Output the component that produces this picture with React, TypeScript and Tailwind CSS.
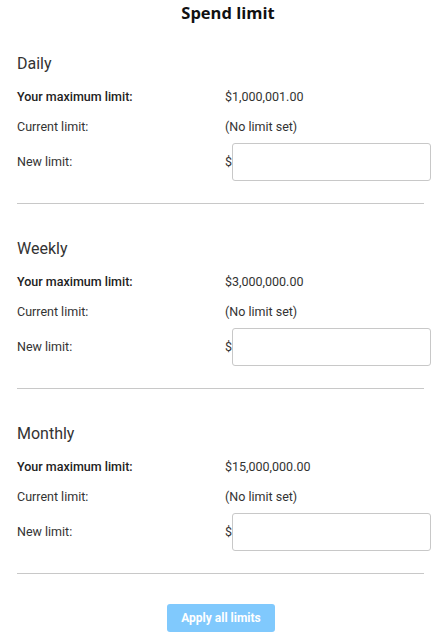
import React from 'react';

const sections = [
  { title: 'Daily', max: '$1,000,001.00' },
  { title: 'Weekly', max: '$3,000,000.00' },
  { title: 'Monthly', max: '$15,000,000.00' },
];

const LimitSection: React.FC<{ title: string; max: string }> = ({ title, max }) => (
  <div className="pt-[27px] pb-[6px]">
    <div className="h-6 leading-6 text-[16px] text-[#333]">{title}</div>
    <div className="mt-[6px] flex h-[30px] items-center text-[12.5px]">
      <div className="w-[208px] shrink-0 font-medium text-[#222]">Your maximum limit:</div>
      <div className="text-[#333]">{max}</div>
    </div>
    <div className="flex h-[30px] items-center text-[12.5px] text-[#333]">
      <div className="w-[208px] shrink-0">Current limit:</div>
      <div>(No limit set)</div>
    </div>
    <div className="mt-[1px] flex h-[38px] items-center text-[12.5px] text-[#333]">
      <div className="w-[208px] shrink-0">New limit:</div>
      <span className="w-[7px] shrink-0">$</span>
      <input
        type="text"
        className="h-[38px] w-[199px] shrink-0 rounded-[3px] border border-[#c8c8c8] bg-white px-2 outline-none"
      />
    </div>
    <div className="mt-[22px] h-px w-[407px] bg-[#c8c8c8]" />
  </div>
);

export default function App() {
  return (
    <div
      className="w-[445px] min-h-[641px] bg-white pl-[17px] pr-[14px]"
      style={{ fontFamily: 'Roboto, "Liberation Sans", sans-serif' }}
    >
      <h1
        className="h-[25px] pl-[8px] pt-px text-center text-[16.5px] font-bold leading-6 text-[#111]"
        style={{ fontFamily: '"Open Sans", "Liberation Sans", sans-serif' }}
      >
        Spend limit
      </h1>
      {sections.map((s) => (
        <LimitSection key={s.title} title={s.title} max={s.max} />
      ))}
      <div className="flex justify-center pt-[24px] pr-[6px]">
        <button className="h-[28px] w-[108px] rounded-[3px] bg-[#80c9fd] text-[12px] font-bold text-white">
          Apply all limits
        </button>
      </div>
    </div>
  );
}
